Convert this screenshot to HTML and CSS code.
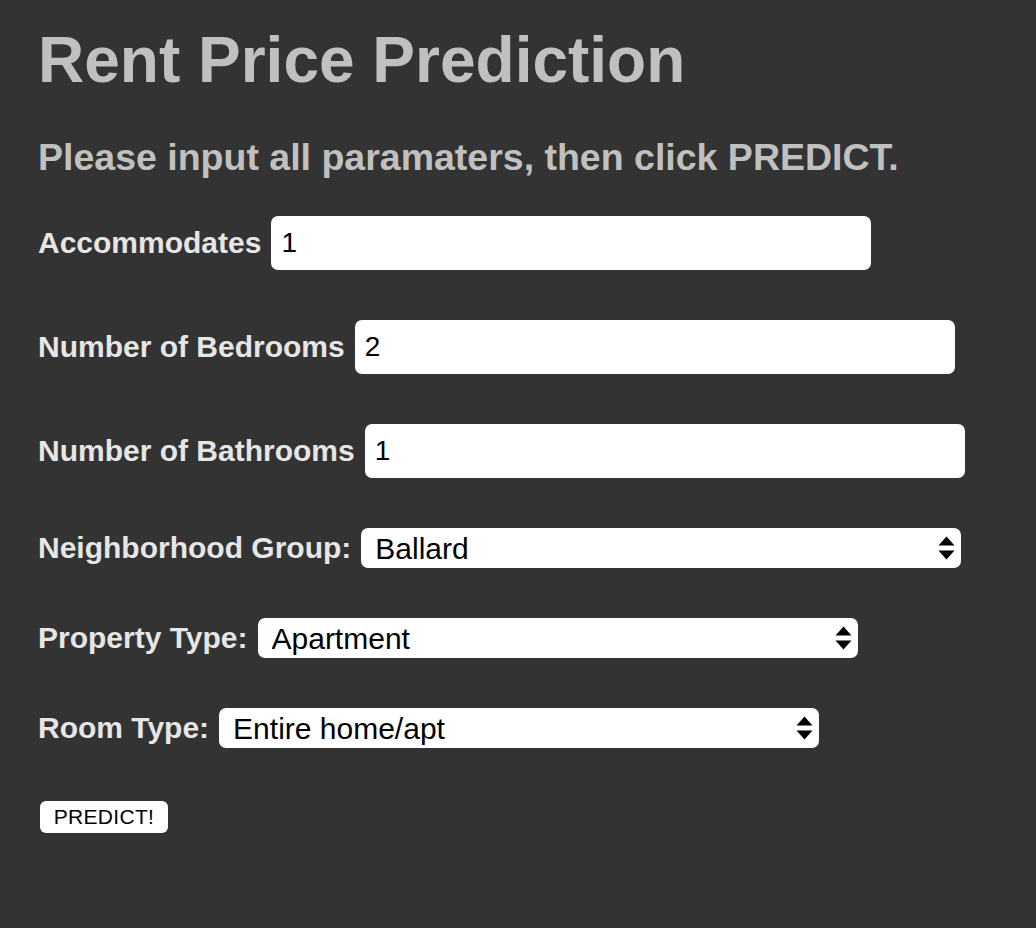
FILE: index.html
```html
<!DOCTYPE html>
<html lang="en">
<head>
<meta charset="utf-8">
<title>Rent Price Prediction</title>
<link rel="stylesheet" href="styles.css">
</head>
<body>
<main class="page">
  <h1 class="title">Rent Price Prediction</h1>
  <h2 class="subtitle">Please input all paramaters, then click PREDICT.</h2>
  <form class="form">
    <div class="row row-input">
      <label class="label" for="acc">Accommodates</label>
      <input class="field" id="acc" type="text" value="1">
    </div>
    <div class="row row-input">
      <label class="label" for="bed">Number of Bedrooms</label>
      <input class="field" id="bed" type="text" value="2">
    </div>
    <div class="row row-input">
      <label class="label" for="bath">Number of Bathrooms</label>
      <input class="field" id="bath" type="text" value="1">
    </div>
    <div class="row row-select">
      <label class="label" for="ng">Neighborhood Group:</label>
      <div class="select-wrap">
        <select class="select" id="ng"><option>Ballard</option></select>
        <svg class="arrows" width="17" height="24" viewBox="0 0 17 24"><path d="M0.5 9.5 L8.5 0.5 L16.5 9.5 Z M0.5 14.5 L8.5 23.5 L16.5 14.5 Z" fill="#000"/></svg>
      </div>
    </div>
    <div class="row row-select">
      <label class="label" for="pt">Property Type:</label>
      <div class="select-wrap">
        <select class="select" id="pt"><option>Apartment</option></select>
        <svg class="arrows" width="17" height="24" viewBox="0 0 17 24"><path d="M0.5 9.5 L8.5 0.5 L16.5 9.5 Z M0.5 14.5 L8.5 23.5 L16.5 14.5 Z" fill="#000"/></svg>
      </div>
    </div>
    <div class="row row-select">
      <label class="label" for="rt">Room Type:</label>
      <div class="select-wrap">
        <select class="select" id="rt"><option>Entire home/apt</option></select>
        <svg class="arrows" width="17" height="24" viewBox="0 0 17 24"><path d="M0.5 9.5 L8.5 0.5 L16.5 9.5 Z M0.5 14.5 L8.5 23.5 L16.5 14.5 Z" fill="#000"/></svg>
      </div>
    </div>
    <button class="btn" type="button">PREDICT!</button>
  </form>
</main>
</body>
</html>
```
FILE: styles.css
```css
html, body {
  margin: 0;
  padding: 0;
  background: #333333;
}
body {
  font-family: "Liberation Sans", Arial, Helvetica, sans-serif;
  min-height: 928px;
}
.page {
  padding: 23px 0 0 38px;
}
.title {
  margin: 0;
  font-size: 64px;
  line-height: 74px;
  font-weight: bold;
  color: #c0c0c0;
}
.subtitle {
  margin: 38px 0 0 0;
  font-size: 37.5px;
  line-height: 44px;
  font-weight: bold;
  color: #c0c0c0;
}
.form {
  display: flex;
  flex-direction: column;
  align-items: flex-start;
  margin-top: 37px;
  gap: 50px;
}
.row {
  display: flex;
  align-items: center;
  gap: 10px;
}
.label {
  font-size: 30px;
  line-height: 36px;
  font-weight: bold;
  color: #e6e6e6;
}
.field {
  box-sizing: border-box;
  width: 600px;
  height: 54px;
  border: none;
  border-radius: 7px;
  background: #ffffff;
  padding: 0 10px;
  margin: 0;
  font-family: "Liberation Sans", Arial, sans-serif;
  font-size: 28px;
  color: #000;
  outline: none;
}
.select-wrap {
  position: relative;
  width: 600px;
  height: 40px;
}
.select {
  box-sizing: border-box;
  width: 600px;
  height: 40px;
  appearance: none;
  -webkit-appearance: none;
  border: none;
  border-radius: 7px;
  background: #ffffff;
  padding: 0 40px 0 14px;
  margin: 0;
  font-family: "Liberation Sans", Arial, sans-serif;
  font-size: 30px;
  color: #000;
  outline: none;
}
.arrows {
  position: absolute;
  right: 6px;
  top: 8px;
  pointer-events: none;
}
.btn {
  box-sizing: border-box;
  margin-top: 3px;
  margin-left: 2px;
  width: 128px;
  height: 32px;
  border: none;
  border-radius: 6px;
  background: #ffffff;
  color: #000;
  font-family: "Liberation Sans", Arial, sans-serif;
  font-size: 21px;
  padding: 0;
  letter-spacing: 0.3px;
}
```
